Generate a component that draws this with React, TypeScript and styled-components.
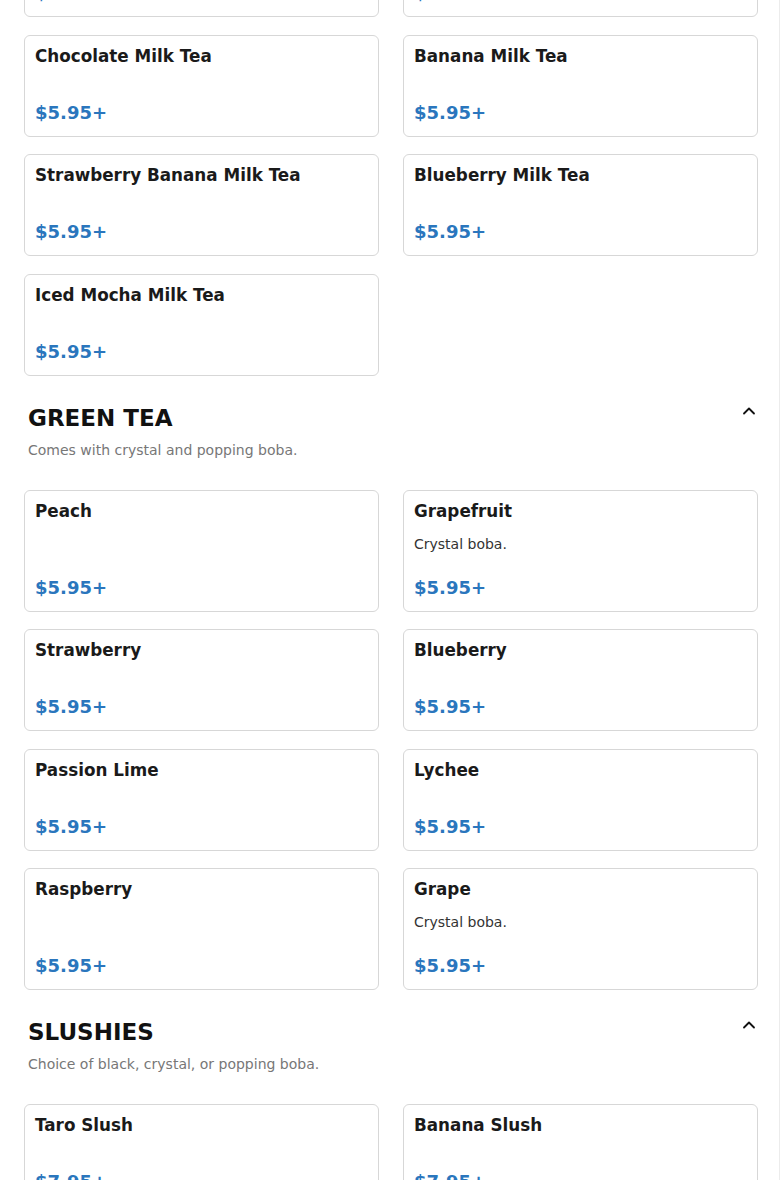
import React from "react"
import styled, { createGlobalStyle } from "styled-components"
import { ChevronUp } from "lucide-react"

const GlobalStyle = createGlobalStyle`
    body {
        margin: 0;
        background: #fff;
        font-family: "DejaVu Sans", "Liberation Sans", sans-serif;
        overflow: hidden;
    }
`

const Page = styled.div`
    width: 780px;
    box-sizing: border-box;
    border-right: 1px solid #ececec;
    padding: 0 21px 40px 24px;
    margin-top: -85px;
`

const Section = styled.section`
    & + & {
        margin-top: 26px;
    }
`

const SectionHeader = styled.div`
    display: flex;
    justify-content: space-between;
    align-items: flex-start;
    padding-left: 4px;
`

const SectionTitle = styled.h2`
    margin: 0;
    font-size: 23px;
    line-height: 32px;
    font-weight: 700;
    color: #111;
`

const Toggle = styled.button`
    border: none;
    background: none;
    padding: 0;
    margin: -1px -1px 0 0;
    display: flex;
    color: #111;
    cursor: pointer;
`

const SectionNote = styled.p`
    margin: 6px 0 30px 4px;
    font-size: 14px;
    line-height: 20px;
    color: #777;
`

const Grid = styled.div`
    display: grid;
    grid-template-columns: 1fr 1fr;
    gap: 17.5px 24px;
`

const Card = styled.div`
    display: flex;
    flex-direction: column;
    border: 1px solid #d7d7d7;
    border-radius: 6px;
    padding: 8px 10px 10px;
    background: #fff;
`

const ItemName = styled.div`
    font-size: 16.8px;
    line-height: 24px;
    font-weight: 700;
    color: #1a1a1a;
    margin-bottom: 11px;
`

const ItemNote = styled.div`
    font-size: 14px;
    line-height: 20px;
    color: #333;
`

const Price = styled.div`
    margin-top: auto;
    padding-top: 21px;
    font-size: 18px;
    line-height: 26px;
    font-weight: 700;
    color: #2a76bd;
`

type Item = { name: string; note?: string; price: string }

const sections: { title?: string; note?: string; items: Item[] }[] = [
    {
        items: [
            { name: "Taro Milk Tea", price: "$5.95+" },
            { name: "Mango Milk Tea", price: "$5.95+" },
            { name: "Chocolate Milk Tea", price: "$5.95+" },
            { name: "Banana Milk Tea", price: "$5.95+" },
            { name: "Strawberry Banana Milk Tea", price: "$5.95+" },
            { name: "Blueberry Milk Tea", price: "$5.95+" },
            { name: "Iced Mocha Milk Tea", price: "$5.95+" },
        ],
    },
    {
        title: "GREEN TEA",
        note: "Comes with crystal and popping boba.",
        items: [
            { name: "Peach", price: "$5.95+" },
            { name: "Grapefruit", note: "Crystal boba.", price: "$5.95+" },
            { name: "Strawberry", price: "$5.95+" },
            { name: "Blueberry", price: "$5.95+" },
            { name: "Passion Lime", price: "$5.95+" },
            { name: "Lychee", price: "$5.95+" },
            { name: "Raspberry", price: "$5.95+" },
            { name: "Grape", note: "Crystal boba.", price: "$5.95+" },
        ],
    },
    {
        title: "SLUSHIES",
        note: "Choice of black, crystal, or popping boba.",
        items: [
            { name: "Taro Slush", price: "$7.95+" },
            { name: "Banana Slush", price: "$7.95+" },
            { name: "Mango Slush", price: "$7.95+" },
            { name: "Strawberry Slush", price: "$7.95+" },
        ],
    },
]

const MenuCard = ({ item }: { item: Item }) => (
    <Card>
        <ItemName>{item.name}</ItemName>
        {item.note && <ItemNote>{item.note}</ItemNote>}
        <Price>{item.price}</Price>
    </Card>
)

export default function App() {
    return (
        <>
            <GlobalStyle />
            <Page>
                {sections.map((s, i) => (
                    <Section key={i}>
                        {s.title && (
                            <>
                                <SectionHeader>
                                    <SectionTitle>{s.title}</SectionTitle>
                                    <Toggle aria-label="collapse">
                                        <ChevronUp size={20} strokeWidth={2.2} />
                                    </Toggle>
                                </SectionHeader>
                                <SectionNote>{s.note}</SectionNote>
                            </>
                        )}
                        <Grid>
                            {s.items.map(item => (
                                <MenuCard key={item.name} item={item} />
                            ))}
                        </Grid>
                    </Section>
                ))}
            </Page>
        </>
    )
}
